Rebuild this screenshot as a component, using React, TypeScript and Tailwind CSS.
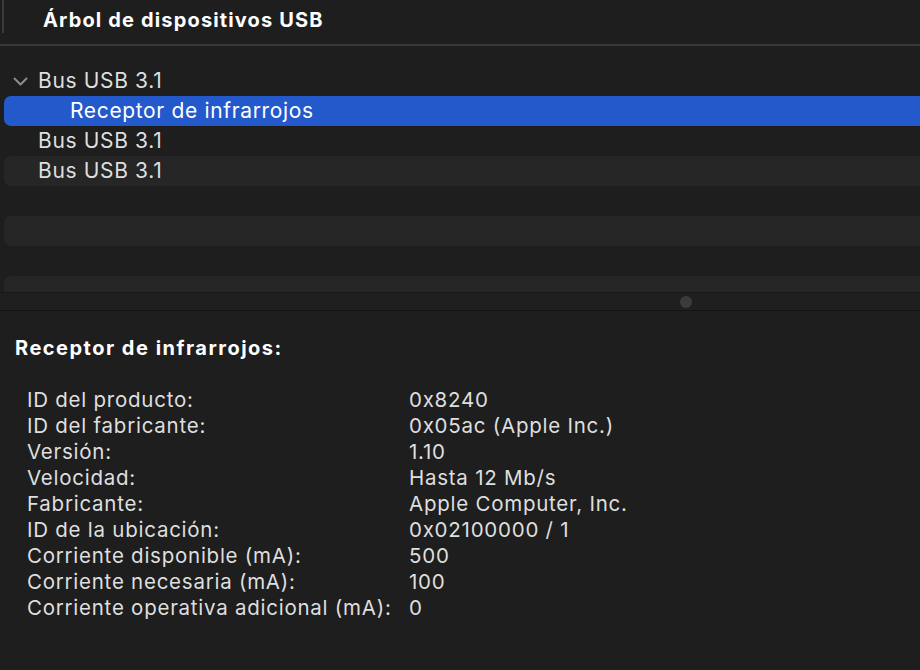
import React from "react";

const rows: { text: string; level: number; chevron?: boolean; selected?: boolean }[] = [
  { text: "Bus USB 3.1", level: 0, chevron: true },
  { text: "Receptor de infrarrojos", level: 1, selected: true },
  { text: "Bus USB 3.1", level: 0 },
  { text: "Bus USB 3.1", level: 0 },
  { text: "", level: 0 },
  { text: "", level: 0 },
  { text: "", level: 0 },
  { text: "", level: 0 },
];

const details: [string, string][] = [
  ["ID del producto:", "0x8240"],
  ["ID del fabricante:", "0x05ac (Apple Inc.)"],
  ["Versión:", "1.10"],
  ["Velocidad:", "Hasta 12 Mb/s"],
  ["Fabricante:", "Apple Computer, Inc."],
  ["ID de la ubicación:", "0x02100000 / 1"],
  ["Corriente disponible (mA):", "500"],
  ["Corriente necesaria (mA):", "100"],
  ["Corriente operativa adicional (mA):", "0"],
];

export default function App() {
  return (
    <div
      className="w-[920px] h-[670px] bg-[#1e1e1e] text-[#dfdfdf] overflow-hidden flex flex-col"
      style={{ fontFamily: "Inter, 'Noto Sans', sans-serif" }}
    >
      {/* Header */}
      <div className="h-[44px] flex items-start shrink-0 relative">
        <div className="w-[2px] h-[33px] bg-[#3a3a3a] ml-[2px]" />
        <div className="ml-[39px] mt-[5px] text-[20px] font-bold text-white tracking-[1.15px]">
          Árbol de dispositivos USB
        </div>
      </div>
      <div className="h-[2px] bg-[#383838] shrink-0" />

      {/* Tree */}
      <div className="h-[246px] overflow-hidden pt-[20px] shrink-0">
        {rows.map((r, i) => (
          <div
            key={i}
            className={
              "h-[30px] flex items-center ml-[4px] rounded-l-[7px] " +
              (r.selected ? "bg-[#2459cc] text-white" : i % 2 === 1 ? "bg-[#262626]" : "")
            }
          >
            <div className="w-[34px] flex items-center justify-center pl-[2px]">
              {r.chevron && (
                <svg width="15" height="9" viewBox="0 0 15 9" className="ml-[-4px]">
                  <path d="M1.5 1.5 L7.5 7.5 L13.5 1.5" fill="none" stroke="#8c8c8c" strokeWidth="2" strokeLinecap="round" strokeLinejoin="round" />
                </svg>
              )}
            </div>
            <span className={"text-[21px] leading-none tracking-[0.65px] -mt-[1px] " + (r.level === 1 ? "ml-[32px]" : "")}>{r.text}</span>
          </div>
        ))}
      </div>

      {/* Splitter */}
      <div className="h-[1px] bg-[#161616] shrink-0" />
      <div className="h-[17px] bg-[#1f1f1f] flex items-center justify-center shrink-0">
        <div className="w-[12px] h-[12px] rounded-full bg-[#3b3b3b] ml-[452px]" />
      </div>
      <div className="h-[1px] bg-[#141414] shrink-0" />

      {/* Details */}
      <div className="pl-[15px] pt-[24px]">
        <div className="text-[20px] font-bold text-white leading-[26px] tracking-[1.5px]">Receptor de infrarrojos:</div>
        <div className="mt-[26px] pl-[12px] flex flex-col">
          {details.map(([k, v], i) => (
            <div key={i} className="flex h-[26px] items-center text-[20.5px] leading-none tracking-[0.75px]">
              <span className="w-[382px] shrink-0">{k}</span>
              <span>{v}</span>
            </div>
          ))}
        </div>
      </div>
    </div>
  );
}
